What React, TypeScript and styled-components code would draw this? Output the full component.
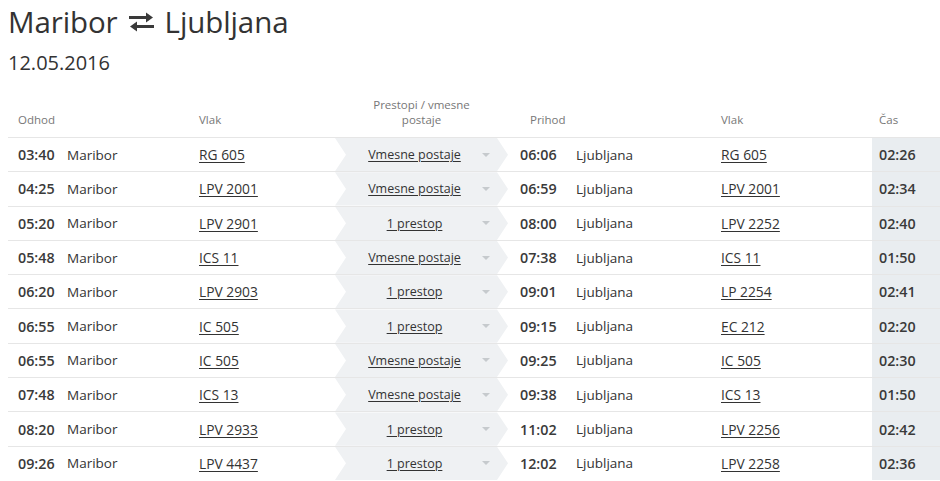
import React from "react";
import styled, { createGlobalStyle } from "styled-components";

const GlobalStyle = createGlobalStyle`
  body {
    margin: 0;
    background: #fff;
    font-family: "Open Sans", "Liberation Sans", sans-serif;
    color: #333;
    overflow: hidden;
  }
`;

const Page = styled.div`
  width: 940px;
  height: 481px;
  overflow: hidden;
  padding-left: 8px;
  box-sizing: border-box;
`;

const Title = styled.h1`
  margin: 0;
  padding-top: 4px;
  font-size: 29.5px;
  font-weight: 400;
  line-height: 36px;
  color: #333;
  display: flex;
  align-items: center;
  gap: 10px;
  letter-spacing: -0.1px;
`;

const DateLine = styled.div`
  margin-top: 11px;
  font-size: 20px;
  line-height: 24px;
  color: #333;
`;

const Table = styled.div`
  margin-top: 19px;
  width: 980px;
`;

const Row = styled.div`
  display: grid;
  grid-template-columns: 49px 132px 146px 173px 58px 145px 161px 116px;
  height: 34.3px;
  border-top: 1px solid #e6e6e6;
  box-sizing: border-box;
  font-size: 13.5px;
  align-items: stretch;
`;

const HeadRow = styled(Row)`
  height: 43px;
  border-top: none;
  font-size: 11.5px;
  color: #777;
`;

const HeadCell = styled.div<{ $span?: number; $pad?: number; $center?: boolean }>`
  grid-column: span ${(p) => p.$span ?? 1};
  padding-left: ${(p) => p.$pad ?? 10}px;
  display: flex;
  align-items: flex-end;
  justify-content: ${(p) => (p.$center ? "center" : "flex-start")};
  text-align: ${(p) => (p.$center ? "center" : "left")};
  padding-bottom: 10px;
  line-height: 15px;
`;

const Cell = styled.div<{ $pad?: number }>`
  padding-left: ${(p) => p.$pad ?? 10}px;
  display: flex;
  align-items: center;
  white-space: nowrap;
`;

const Time = styled(Cell)`
  font-weight: 600;
  font-size: 14.3px;
  color: #3a3a3a;
`;

const Train = styled.a`
  color: #333;
  font-size: 13.8px;
  text-decoration: underline;
  text-underline-offset: 2px;
`;

const Stops = styled.div`
  background: #eff1f3;
  clip-path: polygon(0 0, calc(100% - 11px) 0, 100% 50%, calc(100% - 11px) 100%, 0 100%, 11px 50%);
  display: flex;
  align-items: center;
  padding-left: 12px;
  padding-right: 18px;
  font-size: 12.5px;
`;

const StopsLink = styled.a`
  flex: 1;
  text-align: center;
  color: #333;
  text-decoration: underline;
  text-underline-offset: 2px;
`;

const Caret = styled.span`
  width: 0;
  height: 0;
  border-left: 4px solid transparent;
  border-right: 4px solid transparent;
  border-top: 4px solid #c6cacd;
`;

const Duration = styled(Time)`
  background: #e9edf0;
  padding-left: 7px;
`;

const SwapIcon = () => (
  <svg width="27" height="20" viewBox="0 0 27 20" fill="none">
    <path d="M1 5.5h20" stroke="#3a3a3a" strokeWidth="3" />
    <path d="M18 0.5l7 5-7 5z" fill="#3a3a3a" />
    <path d="M26 14.5H6" stroke="#3a3a3a" strokeWidth="3" />
    <path d="M9 9.5l-7 5 7 5z" fill="#3a3a3a" />
  </svg>
);

type Connection = {
  dep: string;
  depTrain: string;
  stops: string;
  arr: string;
  arrTrain: string;
  dur: string;
};

const connections: Connection[] = [
  { dep: "03:40", depTrain: "RG 605", stops: "Vmesne postaje", arr: "06:06", arrTrain: "RG 605", dur: "02:26" },
  { dep: "04:25", depTrain: "LPV 2001", stops: "Vmesne postaje", arr: "06:59", arrTrain: "LPV 2001", dur: "02:34" },
  { dep: "05:20", depTrain: "LPV 2901", stops: "1 prestop", arr: "08:00", arrTrain: "LPV 2252", dur: "02:40" },
  { dep: "05:48", depTrain: "ICS 11", stops: "Vmesne postaje", arr: "07:38", arrTrain: "ICS 11", dur: "01:50" },
  { dep: "06:20", depTrain: "LPV 2903", stops: "1 prestop", arr: "09:01", arrTrain: "LP 2254", dur: "02:41" },
  { dep: "06:55", depTrain: "IC 505", stops: "1 prestop", arr: "09:15", arrTrain: "EC 212", dur: "02:20" },
  { dep: "06:55", depTrain: "IC 505", stops: "Vmesne postaje", arr: "09:25", arrTrain: "IC 505", dur: "02:30" },
  { dep: "07:48", depTrain: "ICS 13", stops: "Vmesne postaje", arr: "09:38", arrTrain: "ICS 13", dur: "01:50" },
  { dep: "08:20", depTrain: "LPV 2933", stops: "1 prestop", arr: "11:02", arrTrain: "LPV 2256", dur: "02:42" },
  { dep: "09:26", depTrain: "LPV 4437", stops: "1 prestop", arr: "12:02", arrTrain: "LPV 2258", dur: "02:36" },
];

export default function App() {
  return (
    <Page>
      <GlobalStyle />
      <Title>
        Maribor <SwapIcon /> Ljubljana
      </Title>
      <DateLine>12.05.2016</DateLine>
      <Table>
        <HeadRow>
          <HeadCell $span={2}>Odhod</HeadCell>
          <HeadCell>Vlak</HeadCell>
          <HeadCell $center $pad={0}>
            Prestopi / vmesne
            <br />
            postaje
          </HeadCell>
          <HeadCell $span={2} $pad={22}>
            Prihod
          </HeadCell>
          <HeadCell>Vlak</HeadCell>
          <HeadCell $pad={7}>Čas</HeadCell>
        </HeadRow>
        {connections.map((c, i) => (
          <Row key={i}>
            <Time>{c.dep}</Time>
            <Cell>Maribor</Cell>
            <Cell>
              <Train>{c.depTrain}</Train>
            </Cell>
            <Stops>
              <StopsLink>{c.stops}</StopsLink>
              <Caret />
            </Stops>
            <Time $pad={12}>{c.arr}</Time>
            <Cell>Ljubljana</Cell>
            <Cell>
              <Train>{c.arrTrain}</Train>
            </Cell>
            <Duration>{c.dur}</Duration>
          </Row>
        ))}
      </Table>
    </Page>
  );
}
